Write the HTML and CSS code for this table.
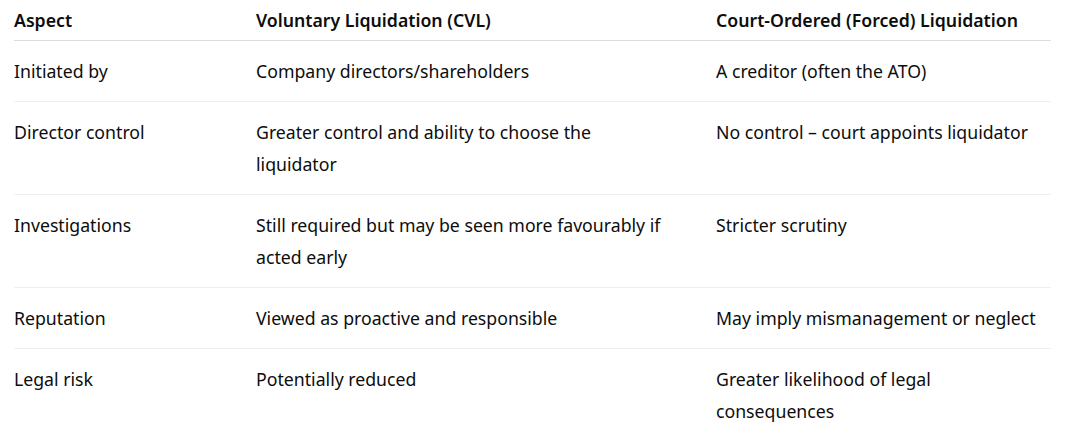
FILE: index.html
```html
<!DOCTYPE html>
<html lang="en">
<head>
<meta charset="utf-8">
<title>Liquidation comparison</title>
<link rel="stylesheet" href="styles.css">
</head>
<body>
<table class="cmp">
  <colgroup>
    <col class="c1"><col class="c2"><col class="c3">
  </colgroup>
  <thead>
    <tr><th>Aspect</th><th class="mid">Voluntary Liquidation (CVL)</th><th class="last">Court-Ordered (Forced) Liquidation</th></tr>
  </thead>
  <tbody>
    <tr><td>Initiated by</td><td class="mid">Company directors/shareholders</td><td class="last">A creditor (often the ATO)</td></tr>
    <tr><td>Director control</td><td class="mid">Greater control and ability to choose the liquidator</td><td class="last">No control – court appoints liquidator</td></tr>
    <tr><td>Investigations</td><td class="mid">Still required but may be seen more favourably if acted early</td><td class="last">Stricter scrutiny</td></tr>
    <tr><td>Reputation</td><td class="mid">Viewed as proactive and responsible</td><td class="last">May imply mismanagement or neglect</td></tr>
    <tr><td>Legal risk</td><td class="mid">Potentially reduced</td><td class="last">Greater likelihood of legal consequences</td></tr>
  </tbody>
</table>
</body>
</html>
```
FILE: styles.css
```css
html, body {
  margin: 0;
  padding: 0;
  background: #ffffff;
}
body {
  font-family: "Noto Sans", "Open Sans", sans-serif;
  font-size: 17.7px;
  color: #0d0d0d;
  padding: 0 18px 0 14px;
}
.cmp {
  width: 1037px;
  border-collapse: collapse;
  table-layout: fixed;
}
.c1 { width: 242px; }
.c2 { width: 460px; }
.c3 { width: 335px; }
.cmp th, .cmp td {
  text-align: left;
  vertical-align: top;
  line-height: 32px;
  padding: 14px 16px 14px 0;
}
.cmp .mid {
  padding-right: 48px;
}
.cmp .last {
  padding-right: 6px;
}
.cmp th {
  font-weight: 600;
  padding-top: 4px;
  padding-bottom: 4px;
  border-bottom: 1px solid #dcdcdc;
}
.cmp tbody tr + tr td {
  border-top: 1px solid #efefef;
}
```
